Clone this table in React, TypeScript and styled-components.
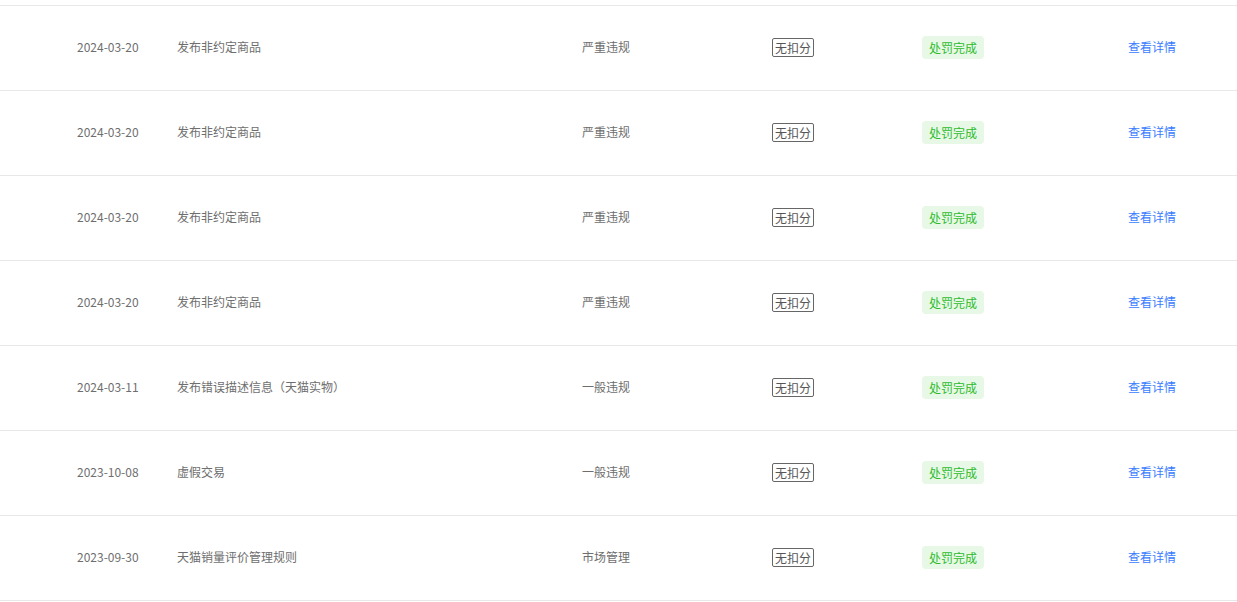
import React from "react";
import styled, { createGlobalStyle } from "styled-components";

const GlobalStyle = createGlobalStyle`
  html, body {
    margin: 0;
    padding: 0;
    background: #fff;
    font-family: "Noto Sans CJK SC", "Noto Sans", sans-serif;
  }
`;

const Table = styled.div`
  padding-top: 5px;
  width: 1237px;
  border-bottom: 1px solid #e8e8e8;
`;

const Row = styled.div`
  display: grid;
  grid-template-columns: 100px 405px 190px 150px 206px 1fr;
  align-items: center;
  box-sizing: border-box;
  height: 85px;
  padding: 0 0 2px 77px;
  border-top: 1px solid #e8e8e8;
  font-size: 12px;
  color: #6e6e6e;
`;

const Cell = styled.div`
  white-space: nowrap;
  line-height: 18px;
`;

const ScoreTag = styled.span`
  display: inline-block;
  border: 1px solid #666;
  border-radius: 2px;
  padding: 0 2px;
  line-height: 17px;
  color: #555;
`;

const StatusTag = styled.span`
  display: inline-block;
  background: #e7f8e6;
  color: #2dbb2d;
  border-radius: 4px;
  padding: 0 7px;
  line-height: 23px;
`;

const Link = styled.a`
  color: #3a7cff;
  text-decoration: none;
  cursor: pointer;
`;

type Record = {
  date: string;
  title: string;
  type: string;
};

const records: Record[] = [
  { date: "2024-03-20", title: "发布非约定商品", type: "严重违规" },
  { date: "2024-03-20", title: "发布非约定商品", type: "严重违规" },
  { date: "2024-03-20", title: "发布非约定商品", type: "严重违规" },
  { date: "2024-03-20", title: "发布非约定商品", type: "严重违规" },
  { date: "2024-03-11", title: "发布错误描述信息（天猫实物）", type: "一般违规" },
  { date: "2023-10-08", title: "虚假交易", type: "一般违规" },
  { date: "2023-09-30", title: "天猫销量评价管理规则", type: "市场管理" },
];

export default function App() {
  return (
    <>
      <GlobalStyle />
      <Table>
        {records.map((r, i) => (
          <Row key={i}>
            <Cell>{r.date}</Cell>
            <Cell>{r.title}</Cell>
            <Cell>{r.type}</Cell>
            <Cell>
              <ScoreTag>无扣分</ScoreTag>
            </Cell>
            <Cell>
              <StatusTag>处罚完成</StatusTag>
            </Cell>
            <Cell>
              <Link>查看详情</Link>
            </Cell>
          </Row>
        ))}
      </Table>
    </>
  );
}
